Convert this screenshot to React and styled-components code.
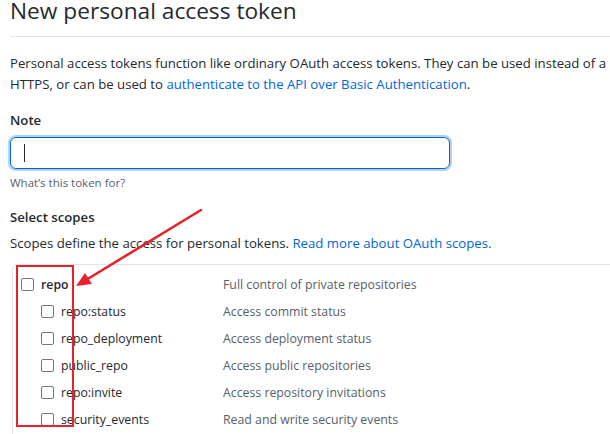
import React from "react";
import styled, { createGlobalStyle } from "styled-components";

const scopes = [
  { name: "repo", desc: "Full control of private repositories", parent: true },
  { name: "repo:status", desc: "Access commit status" },
  { name: "repo_deployment", desc: "Access deployment status" },
  { name: "public_repo", desc: "Access public repositories" },
  { name: "repo:invite", desc: "Access repository invitations" },
  { name: "security_events", desc: "Read and write security events" },
];

const App = () => {
  return (
    <Page>
      <GlobalStyle />
      <Subhead>
        <Heading>New personal access token</Heading>
      </Subhead>
      <Lead>
        Personal access tokens function like ordinary OAuth access tokens. They
        can be used instead of a password for Git over
        <br />
        HTTPS, or can be used to{" "}
        <Link>authenticate to the API over Basic Authentication</Link>.
      </Lead>

      <Label>Note</Label>
      <NoteInput>
        <Caret />
      </NoteInput>
      <Hint>What’s this token for?</Hint>

      <Label $top={15}>Select scopes</Label>
      <Text>
        Scopes define the access for personal tokens.{" "}
        <Link>Read more about OAuth scopes.</Link>
      </Text>

      <ScopeBox>
        {scopes.map((scope) => (
          <ScopeRow key={scope.name}>
            <ScopeName $child={!scope.parent}>
              <Checkbox />
              <ScopeLabel $bold={scope.parent}>{scope.name}</ScopeLabel>
            </ScopeName>
            <ScopeDesc>{scope.desc}</ScopeDesc>
          </ScopeRow>
        ))}
      </ScopeBox>

      <Annotation width="610" height="434" viewBox="0 0 610 434">
        <rect
          x="17"
          y="266"
          width="56"
          height="160"
          fill="none"
          stroke="#e8222b"
          strokeWidth="2"
        />
        <line
          x1="201"
          y1="210"
          x2="86"
          y2="280"
          stroke="#e8222b"
          strokeWidth="2.6"
          strokeLinecap="round"
        />
        <polygon points="76,286 85,273 92,284" fill="#e8222b" />
      </Annotation>
    </Page>
  );
};

const GlobalStyle = createGlobalStyle`
  body {
    margin: 0;
    background: #ffffff;
    overflow: hidden;
  }
`;

const Page = styled.div`
  position: relative;
  width: 900px;
  height: 434px;
  padding: 0 0 0 10px;
  font-family: "Open Sans", "Noto Sans", sans-serif;
  font-size: 13.2px;
  line-height: 21px;
  color: #24292e;
  box-sizing: border-box;
`;

const Subhead = styled.div`
  padding-bottom: 14px;
  border-bottom: 1px solid #e1e4e8;
`;

const Heading = styled.h1`
  margin: 0;
  font-size: 22.7px;
  line-height: 22px;
  font-weight: 400;
`;

const Lead = styled.p`
  margin: 16px 0 0;
  white-space: nowrap;
`;

const Link = styled.a`
  color: #0366d6;
  text-decoration: none;
`;

const Label = styled.div`
  margin-top: ${(p) => p.$top ?? 15}px;
  font-weight: 600;
`;

const NoteInput = styled.div`
  margin-top: 6px;
  width: 440px;
  height: 32px;
  box-sizing: border-box;
  border: 1px solid #0366d6;
  border-radius: 6px;
  box-shadow: 0 0 0 2px rgba(3, 102, 214, 0.3);
  display: flex;
  align-items: center;
  padding-left: 13px;
`;

const Caret = styled.span`
  width: 1px;
  height: 18px;
  background: #24292e;
`;

const Hint = styled.div`
  margin-top: 5px;
  font-size: 11.5px;
  line-height: 18px;
  color: #586069;
`;

const Text = styled.p`
  margin: 5px 0 0;
`;

const ScopeBox = styled.div`
  margin-top: 10px;
  margin-left: 2px;
  padding-top: 6px;
  border: 1px solid #e1e4e8;
  border-radius: 6px;
  height: 300px;
  font-size: 12.3px;
`;

const ScopeRow = styled.div`
  display: flex;
  align-items: center;
  height: 27px;
`;

const ScopeName = styled.div`
  width: 210px;
  box-sizing: border-box;
  padding-left: ${(p) => (p.$child ? 28 : 8)}px;
  display: flex;
  align-items: center;
  gap: 7px;
`;

const Checkbox = styled.span`
  width: 13px;
  height: 13px;
  box-sizing: border-box;
  border: 1px solid #767676;
  border-radius: 2px;
  background: #fff;
  flex: none;
`;

const ScopeLabel = styled.span`
  font-weight: ${(p) => (p.$bold ? 600 : 400)};
  color: #24292e;
`;

const ScopeDesc = styled.span`
  color: #586069;
`;

const Annotation = styled.svg`
  position: absolute;
  left: 0;
  top: 0;
  pointer-events: none;
`;

export default App;
